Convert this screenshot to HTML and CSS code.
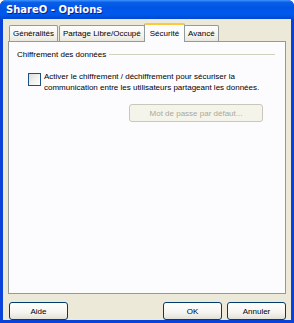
FILE: index.html
```html
<!DOCTYPE html>
<html lang="fr">
<head>
    <meta charset="UTF-8">
    <title>ShareO - Options</title>
    <link rel="stylesheet" href="styles.css">
</head>
<body>
    <div class="window">
        <div class="titlebar">ShareO - Options</div>
        <div class="client">
            <div class="tabs">
                <div class="tab">Généralités</div>
                <div class="tab">Partage Libre/Occupé</div>
                <div class="tab active">Sécurité</div>
                <div class="tab">Avancé</div>
            </div>
            <div class="panel">
                <div class="group-title">
                    <span>Chiffrement des données</span>
                    <div class="group-line"></div>
                </div>
                <div class="check">
                    <div class="box"></div>
                    <div class="check-label">Activer le chiffrement / déchiffrement pour sécuriser la<br>communication entre les utilisateurs partageant les données.</div>
                </div>
                <div class="panel-actions">
                    <button class="btn disabled">Mot de passe par défaut...</button>
                </div>
            </div>
            <div class="footer">
                <button class="btn wide">Aide</button>
                <div class="spacer"></div>
                <button class="btn wide">OK</button>
                <button class="btn wide">Annuler</button>
            </div>
        </div>
    </div>
</body>
</html>
```

FILE: styles.css
```css
body {
    margin: 0;
    padding: 0;
    width: 294px;
    height: 323px;
    overflow: hidden;
    background: #fff;
    font-family: 'Liberation Sans', Arial, sans-serif;
    font-size: 8px;
    color: #000;
}

.window {
    width: 294px;
    height: 323px;
    display: flex;
    flex-direction: column;
    background: #0842d8;
    border-radius: 6px 6px 0 0;
    overflow: hidden;
}

.titlebar {
    height: 22px;
    display: flex;
    align-items: center;
    padding-left: 6px;
    color: #fff;
    font-family: 'DejaVu Sans', sans-serif;
    font-weight: bold;
    font-size: 10px;
    text-shadow: 1px 1px 0 #0a1e8a;
    background: linear-gradient(180deg, #3d95ff 0%, #0a5fe8 12%, #0055e5 40%, #0058ee 75%, #0048d0 100%);
}

.client {
    flex: 1;
    margin: 0 3px 3px 3px;
    background: #ece9d8;
    display: flex;
    flex-direction: column;
    padding: 4px 5px 0 5px;
}

.tabs {
    display: flex;
    align-items: flex-end;
    height: 18px;
    padding-left: 1px;
}

.tab {
    height: 15px;
    padding: 0 3px;
    display: flex;
    align-items: center;
    background: linear-gradient(180deg, #fefefe 0%, #f4f3ee 60%, #e9e7de 100%);
    border: 1px solid #919b9c;
    border-bottom: none;
    border-radius: 2px 2px 0 0;
    margin-right: 1px;
}

.tab.active {
    height: 17px;
    background: #fcfcfe;
    border-top: 2px solid #ffc83c;
    position: relative;
    top: 1px;
    z-index: 1;
    margin: 0 -1px 0 -2px;
    padding: 0 5px;
}

.panel {
    height: 245px;
    background: #fcfcfe;
    border: 1px solid #919b9c;
    padding: 6px 10px 0 8px;
}

.group-title {
    display: flex;
    align-items: center;
    gap: 3px;
    height: 12px;
}

.group-line {
    flex: 1;
    border-top: 1px solid #d0d0bf;
}

.check {
    display: flex;
    align-items: flex-start;
    margin: 11px 0 0 11px;
    gap: 3px;
}

.box {
    width: 11px;
    height: 11px;
    border: 1px solid #1c5180;
    background: linear-gradient(135deg, #dcdcd7 0%, #f4f4f2 60%, #fff 100%);
    margin-top: 2px;
    flex-shrink: 0;
}

.check-label {
    line-height: 11px;
}

.panel-actions {
    display: flex;
    justify-content: flex-end;
    margin: 11px 12px 0 0;
}

.btn {
    font-family: 'Liberation Sans', Arial, sans-serif;
    font-size: 8px;
    height: 18px;
    border: 1px solid #003c74;
    border-radius: 3px;
    background: linear-gradient(180deg, #fff 0%, #f5f4f0 60%, #e3e0d5 100%);
    color: #000;
    padding: 0;
}

.btn.disabled {
    width: 134px;
    border-color: #c9c7ba;
    background: #f5f4ea;
    color: #aca899;
}

.btn.wide {
    width: 59px;
}

.footer {
    display: flex;
    align-items: center;
    gap: 5px;
    margin-top: 8px;
    padding-left: 1px;
}

.spacer {
    flex: 1;
}
```
